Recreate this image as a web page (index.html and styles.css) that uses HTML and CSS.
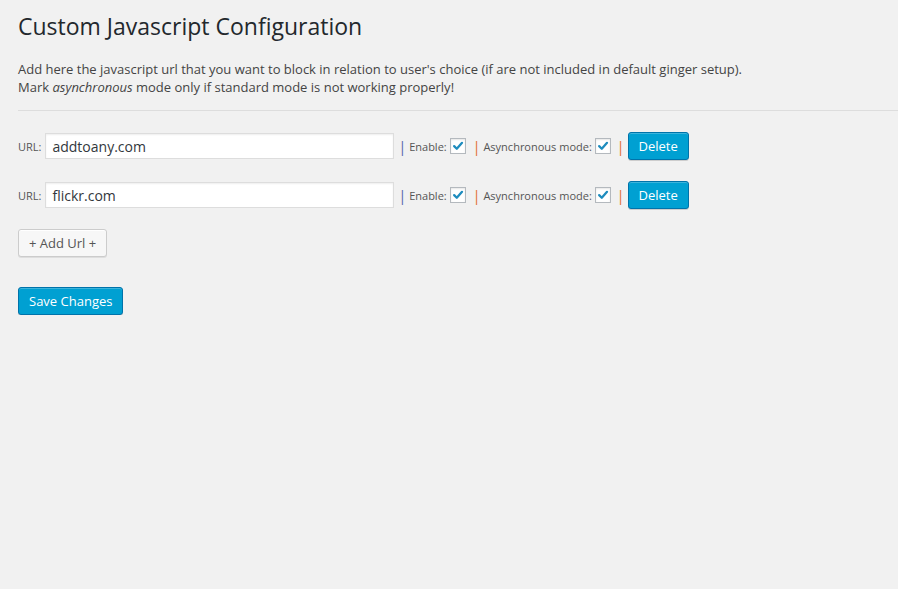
FILE: index.html
```html
<!DOCTYPE html>
<html lang="en">
<head>
    <meta charset="UTF-8">
    <meta name="viewport" content="width=device-width, initial-scale=1.0">
    <title>Custom Javascript Configuration</title>
    <link rel="stylesheet" href="styles.css">
</head>
<body>
    <div class="wrap">
        <h1>Custom Javascript Configuration</h1>
        <p class="intro">
            Add here the javascript url that you want to block in relation to user's choice (if are not included in default ginger setup).<br>
            Mark <em>asynchronous</em> mode only if standard mode is not working properly!
        </p>
        <hr>

        <div class="url-list">
            <div class="url-row">
                <label class="small">URL:</label>
                <input type="text" class="url-input" value="addtoany.com">
                <span class="sep blue">|</span>
                <label class="small">Enable:</label>
                <span class="check"><svg viewBox="0 0 16 16"><path d="M3.6 8.2 L6.6 11.2 L12.6 4.4"/></svg></span>
                <span class="sep orange">|</span>
                <label class="small">Asynchronous mode:</label>
                <span class="check"><svg viewBox="0 0 16 16"><path d="M3.6 8.2 L6.6 11.2 L12.6 4.4"/></svg></span>
                <span class="sep orange last">|</span>
                <button class="button primary">Delete</button>
            </div>
            <div class="url-row">
                <label class="small">URL:</label>
                <input type="text" class="url-input" value="flickr.com">
                <span class="sep blue">|</span>
                <label class="small">Enable:</label>
                <span class="check"><svg viewBox="0 0 16 16"><path d="M3.6 8.2 L6.6 11.2 L12.6 4.4"/></svg></span>
                <span class="sep orange">|</span>
                <label class="small">Asynchronous mode:</label>
                <span class="check"><svg viewBox="0 0 16 16"><path d="M3.6 8.2 L6.6 11.2 L12.6 4.4"/></svg></span>
                <span class="sep orange last">|</span>
                <button class="button primary">Delete</button>
            </div>
        </div>

        <button class="button secondary add-url">+ Add Url +</button>

        <div class="submit">
            <button class="button primary">Save Changes</button>
        </div>
    </div>
</body>
</html>
```

FILE: styles.css
```css
body {
    margin: 0;
    padding: 0;
    background-color: #f1f1f1;
    font-family: "Open Sans", "Liberation Sans", sans-serif;
    font-size: 13px;
    color: #444;
}
.wrap {
    padding: 12px 0 0 18px;
}
h1 {
    font-size: 23px;
    font-weight: 400;
    line-height: 29px;
    color: #23282d;
    margin: 0;
}
.intro {
    line-height: 18px;
    margin: 19px 0 0 0;
}
hr {
    border: 0;
    border-top: 1px solid #ddd;
    margin: 14px 0 0 0;
}
.url-list {
    margin-top: 21px;
}
.url-row {
    display: flex;
    align-items: center;
    height: 28px;
    margin-bottom: 21px;
}
.small {
    font-size: 11px;
    color: #555;
}
.url-input {
    width: 349px;
    height: 26px;
    box-sizing: border-box;
    margin: 0 0 0 4px;
    padding: 2px 6px;
    border: 1px solid #ddd;
    box-shadow: inset 0 1px 2px rgba(0, 0, 0, 0.07);
    background-color: #fff;
    color: #32373c;
    font-family: "Open Sans", "Liberation Sans", sans-serif;
    font-size: 14px;
    outline: none;
}
.sep {
    font-size: 14px;
    margin: 0 3px 0 4px;
}
.sep.blue {
    color: #4f5fa8;
}
.sep.orange {
    color: #e0692f;
    margin-left: 7px;
}
.sep.last {
    margin-left: 6px;
}
.check {
    width: 16px;
    height: 16px;
    box-sizing: border-box;
    margin-left: 3px;
    border: 1px solid #b4b9be;
    background-color: #fff;
    box-shadow: inset 0 1px 2px rgba(0, 0, 0, 0.1);
    display: flex;
}
.check svg {
    width: 14px;
    height: 14px;
    fill: none;
    stroke: #1e8cbe;
    stroke-width: 2.6;
    stroke-linecap: round;
    stroke-linejoin: round;
}
.button {
    height: 28px;
    line-height: 26px;
    padding: 0 10px 1px;
    box-sizing: border-box;
    font-family: "Open Sans", "Liberation Sans", sans-serif;
    font-size: 13px;
    border-radius: 3px;
    border: 1px solid;
    cursor: pointer;
    margin: 0;
}
.button.primary {
    background-color: #00a0d2;
    border-color: #0073aa;
    color: #fff;
    box-shadow: inset 0 1px 0 rgba(120, 200, 230, 0.5), 0 1px 0 rgba(0, 0, 0, 0.15);
}
.button.secondary {
    background-color: #f7f7f7;
    border-color: #ccc;
    color: #555;
    box-shadow: inset 0 1px 0 #fff, 0 1px 0 rgba(0, 0, 0, 0.08);
}
.add-url {
    margin-top: -1px;
}
.submit {
    margin-top: 30px;
}
```
